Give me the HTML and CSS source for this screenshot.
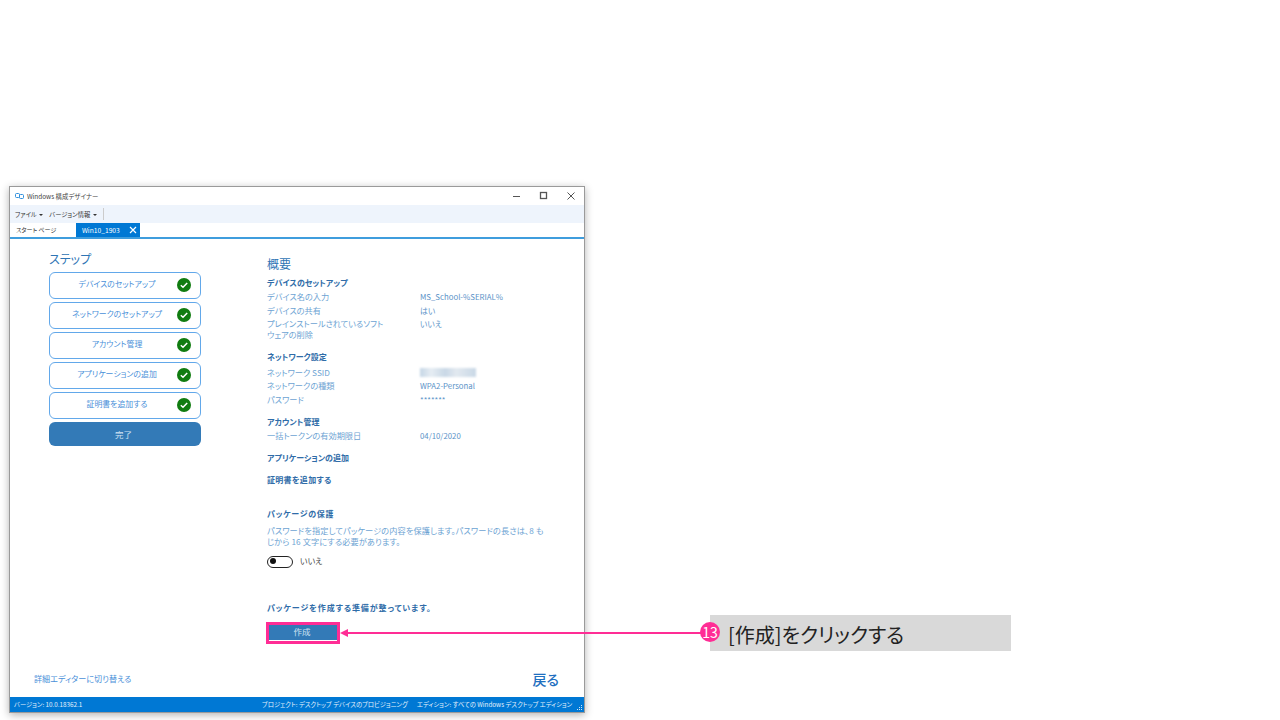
FILE: index.html
```html
<!DOCTYPE html>
<html lang="ja">
<head>
    <meta charset="UTF-8">
    <meta name="viewport" content="width=device-width, initial-scale=1.0">
    <title>Windows 構成デザイナー</title>
    <link rel="stylesheet" href="styles.css">
</head>
<body>
    <div class="window">
        <div class="titlebar">
            <svg class="app-icon" width="9" height="6" viewBox="0 0 9 6">
                <rect x="0.5" y="0.5" width="4" height="4" rx="1" fill="none" stroke="#2f8fdc"/>
                <rect x="4.5" y="1.5" width="4" height="4" rx="1" fill="none" stroke="#2f8fdc"/>
            </svg>
            <span class="app-name">Windows 構成デザイナー</span>
            <div class="window-controls">
                <svg width="10" height="10" viewBox="0 0 10 10"><path d="M1 5.5H8" stroke="#555" stroke-width="1"/></svg>
                <svg width="10" height="10" viewBox="0 0 10 10"><rect x="1.5" y="1.5" width="6" height="6" fill="none" stroke="#555" stroke-width="1.3"/></svg>
                <svg width="10" height="10" viewBox="0 0 10 10"><path d="M1.5 1.5L8.5 8.5M8.5 1.5L1.5 8.5" stroke="#555" stroke-width="1"/></svg>
            </div>
        </div>

        <div class="menubar">
            <span class="menu-item">ファイル <i class="caret"></i></span>
            <span class="menu-item">バージョン情報 <i class="caret"></i></span>
            <span class="menu-sep"></span>
        </div>

        <div class="tabs">
            <span class="tab">スタート ページ</span>
            <span class="tab tab-active">Win10_1903
                <svg width="8" height="8" viewBox="0 0 8 8"><path d="M1 1L7 7M7 1L1 7" stroke="#fff" stroke-width="1.2"/></svg>
            </span>
        </div>

        <div class="main">
            <div class="steps">
                <div class="steps-title">ステップ</div>
                <div class="step"><span>デバイスのセットアップ</span><svg class="check" viewBox="0 0 14 14"><circle cx="7" cy="7" r="7" fill="#107c10"/><path d="M3.8 7.2L6 9.2L10.2 5" fill="none" stroke="#fff" stroke-width="1.5"/></svg></div>
                <div class="step"><span>ネットワークのセットアップ</span><svg class="check" viewBox="0 0 14 14"><circle cx="7" cy="7" r="7" fill="#107c10"/><path d="M3.8 7.2L6 9.2L10.2 5" fill="none" stroke="#fff" stroke-width="1.5"/></svg></div>
                <div class="step"><span>アカウント管理</span><svg class="check" viewBox="0 0 14 14"><circle cx="7" cy="7" r="7" fill="#107c10"/><path d="M3.8 7.2L6 9.2L10.2 5" fill="none" stroke="#fff" stroke-width="1.5"/></svg></div>
                <div class="step"><span>アプリケーションの追加</span><svg class="check" viewBox="0 0 14 14"><circle cx="7" cy="7" r="7" fill="#107c10"/><path d="M3.8 7.2L6 9.2L10.2 5" fill="none" stroke="#fff" stroke-width="1.5"/></svg></div>
                <div class="step"><span>証明書を追加する</span><svg class="check" viewBox="0 0 14 14"><circle cx="7" cy="7" r="7" fill="#107c10"/><path d="M3.8 7.2L6 9.2L10.2 5" fill="none" stroke="#fff" stroke-width="1.5"/></svg></div>
                <div class="step step-done">完了</div>
            </div>

            <div class="summary">
                <h1>概要</h1>

                <h2>デバイスのセットアップ</h2>
                <div class="row"><span>デバイス名の入力</span><span class="value">MS_School-%SERIAL%</span></div>
                <div class="row"><span>デバイスの共有</span><span class="value">はい</span></div>
                <div class="row"><span>プレインストールされているソフトウェアの削除</span><span class="value">いいえ</span></div>

                <h2 class="gap-network">ネットワーク設定</h2>
                <div class="row"><span>ネットワーク SSID</span><span class="value"><i class="blurred"></i></span></div>
                <div class="row"><span>ネットワークの種類</span><span class="value">WPA2-Personal</span></div>
                <div class="row"><span>パスワード</span><span class="value">*******</span></div>

                <h2 class="gap-account">アカウント管理</h2>
                <div class="row"><span>一括トークンの有効期限日</span><span class="value">04/10/2020</span></div>

                <h2 class="gap-apps">アプリケーションの追加</h2>
                <h2 class="gap-certs">証明書を追加する</h2>

                <h2 class="gap-protect">パッケージの保護</h2>
                <p class="desc">パスワードを指定してパッケージの内容を保護します。パスワードの長さは、8 もじから 16 文字にする必要があります。</p>
                <div class="toggle-row"><span class="toggle"></span><span class="toggle-label">いいえ</span></div>

                <h2 class="gap-ready">パッケージを作成する準備が整っています。</h2>
                <div class="create-btn">作成</div>
            </div>
        </div>

        <div class="bottom">
            <span class="editor-link">詳細エディターに切り替える</span>
            <span class="back">戻る</span>
        </div>

        <div class="statusbar">
            <span class="status-version">バージョン: 10.0.18362.1</span>
            <span class="status-project">プロジェクト: デスクトップ デバイスのプロビジョニング</span>
            <span class="status-edition">エディション: すべての Windows デスクトップ エディション</span>
            <svg class="grip" width="6" height="6" viewBox="0 0 6 6"><path d="M4 0h1v1H4zM2 2h1v1H2zM4 2h1v1H4zM0 4h1v1H0zM2 4h1v1H2zM4 4h1v1H4z" fill="#cfe4f5"/></svg>
        </div>
    </div>

    <!-- callout over the window -->
    <div class="highlight"></div>
    <svg class="arrow" width="370" height="12" viewBox="0 0 370 12">
        <path d="M8 6H370" stroke="#ff2d95" stroke-width="2"/>
        <path d="M0 6L8 2V10Z" fill="#ff2d95"/>
    </svg>
    <div class="note">[作成]をクリックする</div>
    <div class="note-num">13</div>
</body>
</html>
```
FILE: styles.css
```css
* {
    margin: 0;
    padding: 0;
    box-sizing: border-box;
}

body {
    position: relative;
    width: 1280px;
    height: 720px;
    overflow: hidden;
    background: #fff;
    font-family: "Noto Sans CJK JP", "Noto Sans", sans-serif;
    font-feature-settings: "palt";
    color: #3a7fc0;
}

.window {
    position: absolute;
    left: 9px;
    top: 186px;
    width: 576px;
    height: 527px;
    display: flex;
    flex-direction: column;
    background: #fff;
    border: 1px solid #9a9a9a;
    box-shadow: 0 2px 8px rgba(0, 0, 0, 0.3);
}

.titlebar {
    height: 18px;
    display: flex;
    align-items: center;
    padding-left: 5px;
    font-size: 6.4px;
    color: #444;
}

.app-icon {
    margin-right: 3px;
}

.window-controls {
    margin-left: auto;
    display: flex;
    gap: 17px;
    padding-right: 8px;
}

.menubar {
    height: 18px;
    display: flex;
    align-items: center;
    gap: 6px;
    padding-left: 5px;
    background: #eef4fc;
    font-size: 6.3px;
    color: #333;
}

.caret {
    display: inline-block;
    width: 0;
    height: 0;
    margin-left: 1px;
    vertical-align: middle;
    border-left: 2px solid transparent;
    border-right: 2px solid transparent;
    border-top: 2px solid #333;
}

.menu-sep {
    width: 1px;
    height: 12px;
    background: #ccc;
}

.tabs {
    height: 16px;
    display: flex;
    align-items: flex-end;
    font-size: 6px;
    color: #333;
    border-bottom: 2px solid #3f9ddd;
}

.tab {
    height: 14px;
    width: 66px;
    padding-left: 6px;
    line-height: 14px;
    white-space: nowrap;
}

.tab-active {
    width: 64px;
    padding-left: 6px;
    display: flex;
    align-items: center;
    justify-content: space-between;
    padding-right: 3px;
    background: #0078d4;
    color: #fff;
    font-size: 6.7px;
}

.main {
    flex: 1;
    display: flex;
    min-height: 0;
}

.steps {
    flex: none;
    width: 218px;
    padding: 11px 0 0 39px;
}

.steps-title {
    height: 22px;
    line-height: 18px;
    font-size: 12px;
    color: #2f75b5;
}

.step {
    position: relative;
    width: 152px;
    height: 27px;
    margin-bottom: 3px;
    display: flex;
    align-items: center;
    justify-content: center;
    padding-right: 3px;
    border: 1px solid #62a8ea;
    border-radius: 6px;
    font-size: 7.9px;
    color: #4a90d9;
}

.step span {
    width: 112px;
    margin-right: 13px;
    margin-bottom: 4px;
    text-align: center;
}

.check {
    position: absolute;
    right: 9px;
    top: 5px;
    width: 14px;
    height: 14px;
}

.step-done {
    height: 24px;
    border: none;
    background: #337ab7;
    color: #cfe2f3;
    font-size: 8.5px;
}

.summary {
    flex: 1;
    min-width: 0;
    padding: 17px 36px 0 39px;
}

h1 {
    height: 19px;
    line-height: 16px;
    font-size: 12px;
    font-weight: 400;
    color: #2f75b5;
}

h2 {
    height: 16px;
    padding-top: 1px;
    line-height: 14px;
    font-size: 8px;
    font-weight: 700;
    color: #2f6ca8;
}

.gap-network {
    margin-top: 6px;
    margin-bottom: 2px;
}

.gap-account {
    margin-top: 6px;
}

.gap-apps {
    margin-top: 7px;
}

.gap-certs {
    margin-top: 6px;
    letter-spacing: 0.3px;
}

.gap-protect {
    margin-top: 18px;
    letter-spacing: 0.7px;
}

.gap-ready {
    margin-top: 32px;
    letter-spacing: 0.9px;
}

.row {
    display: grid;
    grid-template-columns: 153px 1fr;
    font-size: 8.2px;
    line-height: 11px;
    padding-bottom: 2.6px;
    color: #6da3d3;
}

.row > span:first-child {
    width: 118px;
}

.value {
    color: #5b93c8;
    font-size: 7.8px;
}

.blurred {
    display: block;
    width: 56px;
    height: 9px;
    margin-top: 1px;
    background: linear-gradient(90deg, #c5d6e6, #e6edf3 20%, #c9d8e6 45%, #e2e9f0 65%, #c9d8e6);
    filter: blur(1px);
}

.desc {
    margin-top: 3px;
    width: 278px;
    font-size: 8.2px;
    line-height: 11px;
    letter-spacing: 0.1px;
    color: #6da3d3;
}

.toggle-row {
    display: flex;
    align-items: center;
    gap: 7px;
    margin-top: 8px;
    height: 13px;
    font-size: 8px;
    color: #444;
}

.toggle-label {
    margin-bottom: 3px;
}

.toggle {
    position: relative;
    width: 26px;
    height: 12px;
    border: 1.5px solid #222;
    border-radius: 6px;
}

.toggle::after {
    content: "";
    position: absolute;
    left: 2px;
    top: 1.5px;
    width: 6px;
    height: 6px;
    border-radius: 50%;
    background: #111;
}

.create-btn {
    width: 70px;
    height: 18px;
    margin-top: 6px;
    background: #337ab7;
    color: #cfe2f3;
    font-size: 8.5px;
    line-height: 18px;
    text-align: center;
}

.bottom {
    height: 39px;
    display: flex;
    align-items: center;
    justify-content: space-between;
    padding: 2px 25px 0 24px;
}

.editor-link {
    font-size: 8.1px;
    color: #4a90d9;
}

.back {
    font-size: 14px;
    font-weight: 500;
    color: #1f6fc0;
}

.statusbar {
    position: relative;
    height: 15px;
    display: flex;
    align-items: center;
    padding-left: 4px;
    background: #0078d4;
    color: #e3f0fb;
    font-size: 6.3px;
    white-space: nowrap;
}

.statusbar span {
    flex-shrink: 0;
}

.status-version {
    width: 248px;
}

.status-project {
    width: 155px;
}

.grip {
    position: absolute;
    right: 1px;
    bottom: 1px;
}

.highlight {
    position: absolute;
    left: 266px;
    top: 622px;
    width: 74px;
    height: 22px;
    border: 3px solid #ff2d95;
}

.arrow {
    position: absolute;
    left: 340px;
    top: 627px;
}

.note {
    position: absolute;
    left: 710px;
    top: 615px;
    width: 301px;
    height: 36px;
    padding-left: 18px;
    background: #d9d9d9;
    color: #222;
    font-size: 20px;
    line-height: 40px;
}

.note-num {
    position: absolute;
    left: 700px;
    top: 622px;
    width: 20px;
    height: 20px;
    border-radius: 50%;
    background: #ff2d95;
    color: #fff;
    font-size: 14px;
    line-height: 20px;
    text-align: center;
}
```
